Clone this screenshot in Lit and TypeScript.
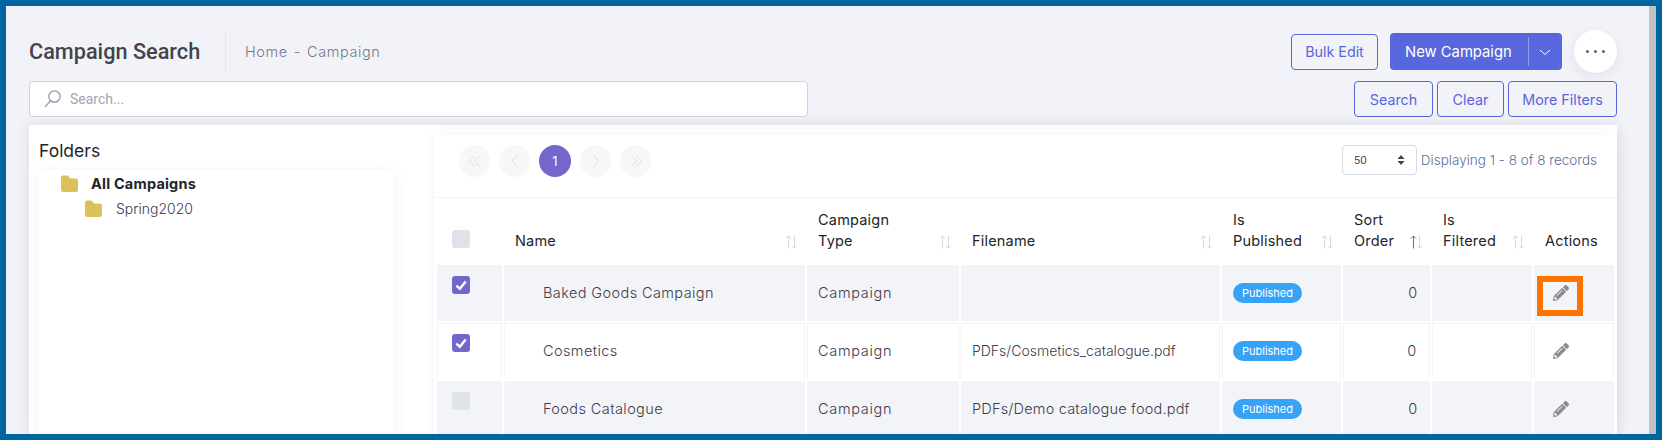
import { LitElement, html, css, svg } from "lit";
import { customElement } from "lit/decorators.js";

const PENCIL = "M497.9 142.1l-46.1 46.1c-4.7 4.7-12.3 4.7-17 0l-111-111c-4.7-4.7-4.7-12.3 0-17l46.1-46.1c18.7-18.7 49.1-18.7 67.9 0l60.1 60.1c18.8 18.7 18.8 49.1 0 67.9zM284.2 99.8L21.6 362.4.4 483.9c-2.9 16.4 11.4 30.6 27.8 27.8l121.5-21.3 262.6-262.6c4.7-4.7 4.7-12.3 0-17l-111-111c-4.8-4.7-12.4-4.7-17.1 0zM124.1 339.9c-5.5-5.5-5.5-14.3 0-19.8l154-154c5.5-5.5 14.3-5.5 19.8 0s5.5 14.3 0 19.8l-154 154c-5.5 5.5-14.3 5.5-19.8 0zM88 424h48v36.3l-64.5 11.3-31.1-31.1L51.7 376H88v48z";

const folder = html`<svg class="folder" viewBox="0 0 17 17"><path d="M2 0.5h4c.8 0 1.3.4 1.7 1L9 3.5h6c1.1 0 2 .9 2 2V15c0 1.1-.9 2-2 2H2c-1.1 0-2-.9-2-2V2.5c0-1.1.9-2 2-2z" fill="#dcc05a"/></svg>`;

const pencil = html`<svg class="pencil" viewBox="0 0 512 512"><path d=${PENCIL} fill="#8b8b97"/></svg>`;

const sortIcon = (active = false) => html`<svg class="sort" viewBox="0 0 13 14" fill="none" stroke-width="1">
  ${svg`<path d="M3.5 13.500V1M1 3.500 3.500 1 6 3.500" stroke=${active ? "#6b6b78" : "#d8dae0"}/>
  <path d="M9.500 .5V13M7 10.500 9.500 13 12 10.500" stroke="#d8dae0"/>`}
</svg>`;

const chev = (d: string) => html`<svg viewBox="0 0 12 12" width="12" height="12" fill="none" stroke="#dcdde4" stroke-width="1">${svg`<path d=${d}/>`}</svg>`;

const rows = [
  { name: "Baked Goods Campaign", file: "", fcls: "", checked: true, marked: true },
  { name: "Cosmetics", file: "PDFs/Cosmetics_catalogue.pdf", fcls: "f1", checked: true, marked: false },
  { name: "Foods Catalogue", file: "PDFs/Demo catalogue food.pdf", fcls: "f2", checked: false, marked: false },
];

const COLS = [65, 301, 152, 259, 119, 87, 100, 80];

@customElement("app-root")
export class AppRoot extends LitElement {
  static styles = css`
    :host { display: block; height: 440px; overflow: hidden; font-family: Inter, "Liberation Sans", sans-serif; }
    * { box-sizing: border-box; }
    .frame { height: 440px; border: 6px solid #0065a1; display: flex; overflow: hidden; background: #f2f3f8; }
    .main { flex: 1; min-width: 0; padding: 24px 32px 0 23px; display: flex; flex-direction: column; }
    .scrollbar { width: 7px; background: #c1c1c1; flex: none; }
    .head { display: flex; align-items: center; height: 43px; flex: none; }
    h1 { margin: 0; font: 500 21.7px/1 Roboto, sans-serif; color: #434349; width: 196px; white-space: nowrap; }
    .vline { width: 1px; height: 41px; background: #e2e5ec; }
    .crumbs { margin-left: 19px; display: flex; gap: 6px; font-size: 14.5px; font-weight: 300; letter-spacing: .6px; color: #74788d; }
    .spacer { flex: 1; }
    .btn { height: 36px; border: 1px solid #5867dd; border-radius: 4px; background: transparent; color: #5867dd;
      font: 400 14.3px Inter, sans-serif; display: flex; align-items: center; justify-content: center; padding: 0; }
    .bulk { width: 87px; }
    .split { margin-left: 12px; width: 172px; height: 37px; background: #5867dd; border-radius: 4px; color: #fff;
      display: flex; align-items: center; font-size: 14.8px; font-weight: 400; padding-left: 15px; }
    .split .lbl { width: 123px; white-space: nowrap; }
    .split .sep { width: 1px; height: 29px; background: rgba(255,255,255,.35); }
    .split svg { margin-left: 10px; }
    .more { margin-left: 12px; width: 43px; height: 43px; border-radius: 50%; background: #fff;
      box-shadow: 0 3px 12px rgba(82,63,105,.1); display: flex; align-items: center; justify-content: center; gap: 5px; }
    .more i { width: 3px; height: 3px; border-radius: 50%; background: #595d6e; }
    .filters { display: flex; margin-top: 8px; height: 36px; flex: none; gap: 4px; }
    .input { width: 779px; height: 36px; background: #fff; border: 1px solid #d0d3dc; border-radius: 4px; display: flex; align-items: center;
      padding-left: 14px; font: 400 14px Roboto, sans-serif; color: #a3a5b1; gap: 9px; margin-right: auto; }
    .s-search { width: 79px; } .s-clear { width: 67px; } .s-more { width: 109px; }
    .wrap { margin-top: 8px; flex: 1; min-height: 0; background: #fff; padding-top: 6px; display: flex; align-items: flex-start;
      box-shadow: 0 0 13px rgba(82,63,105,.14); }
    .left { width: 375px; height: 340px; padding: 0 10px; flex: none; }
    .left h2 { margin: 0; padding-top: 9px; height: 39px; font-size: 17.5px; font-weight: 400; line-height: 22px; color: #212529; }
    .tree { height: 300px; padding-top: 5px; background: #fff; box-shadow: 0 0 13px rgba(82,63,105,.06); }
    .node { display: flex; align-items: center; height: 17px; font-size: 14px; color: #3c3b4d; font-weight: 300; white-space: nowrap; }
    .node.root { padding-left: 22px; gap: 13px; font-size: 14.5px; letter-spacing: .2px; font-weight: 700; color: #212529; margin-bottom: 8px; }
    .node.sub { padding-left: 46px; gap: 14px; }
    .folder { width: 17px; height: 17px; flex: none; }
    .right { margin: 4px 0 0 30px; flex: 1; background: #fff; height: 320px; box-shadow: 0 0 13px rgba(82,63,105,.06); }
    .pager { height: 63px; border-bottom: 1px solid #f3f4f7; display: flex; padding: 10px 20px 0 25px; }
    .circle { width: 31px; height: 32px; border-radius: 50%; background: #f7f7f9; display: flex; align-items: center; justify-content: center;
      margin-right: 9px; font-size: 13px; }
    .circle.on { background: #7367cc; color: #fff; width: 32px; margin-right: 9px; }
    .pg-right { margin-left: auto; display: flex; align-items: center; height: 30px; color: #646c9a; font-size: 13.5px; font-weight: 300; white-space: nowrap; }
    .select { width: 75px; height: 30px; border: 1px solid #d8dbe3; border-radius: 4px; display: flex; align-items: center; justify-content: space-between;
      padding: 0 11px; font: 400 11.5px Roboto, sans-serif; color: #495057; margin-right: 4px; }
    table { table-layout: fixed; border-collapse: separate; border-spacing: 2px; width: 1181px; margin-left: 1px; }
    th { height: 63px; vertical-align: bottom; padding: 0 7px 12px 11px; text-align: left; font-weight: 400; font-size: 14.5px; letter-spacing: .2px; line-height: 21px; color: #212529; }
    th .h { display: flex; justify-content: space-between; align-items: flex-end; }
    th.cbh { padding: 0 0 15px 15px; }
    .sort { width: 13px; height: 14px; flex: none; margin-bottom: 2px; }
    td { height: 56px; padding: 0 11px 2px; font-size: 14.5px; font-weight: 300; letter-spacing: .7px; color: #3c3b4d; vertical-align: middle; position: relative; white-space: nowrap; }
    tr.odd td { background: #f3f4f8; }
    tr.even td { border: 1px solid #f3f4f6; border-bottom-color: transparent; padding-left: 10px; }
    td.cb { padding: 11px 0 0 15px; vertical-align: top; }
    tr.even td.cb { padding: 10px 0 0 14px; }
    td.nm { padding-left: 39px; letter-spacing: .4px; }
    tr.even td.nm { padding-left: 38px; }
    td.pub { padding-bottom: 0; }
    td.num { text-align: right; padding-right: 12px; }
    td.act { padding-left: 19px; padding-bottom: 0; }
    tr.even td.act { padding-left: 18px; }
    td.f1 { font-size: 14px; letter-spacing: 0; }
    td.f2 { font-size: 14.5px; letter-spacing: .2px; }
    .check { width: 18px; height: 18px; border-radius: 3px; background: #e0e2ea; display: flex; align-items: center; justify-content: center; }
    .check.on { background: #7367cc; }
    .badge { display: inline-flex; align-items: center; justify-content: center; width: 69px; height: 20px; border-radius: 10px; background: #36a3f7; color: #fff; font-size: 11px; font-weight: 400; letter-spacing: 0; vertical-align: middle; }
    .pencil { width: 16px; height: 16px; display: block; }
    .mark { position: absolute; left: 3px; top: 11px; width: 46px; height: 40px; border: 6px solid #ff7300; }
  `;

  render() {
    return html`<div class="frame">
      <div class="main">
        <div class="head">
          <h1>Campaign Search</h1><div class="vline"></div>
          <div class="crumbs"><span>Home</span><span>-</span><span>Campaign</span></div>
          <div class="spacer"></div>
          <button class="btn bulk">Bulk Edit</button>
          <div class="split"><span class="lbl">New Campaign</span><span class="sep"></span>
            <svg viewBox="0 0 12 12" width="12" height="12" fill="none" stroke="#fff" stroke-width="1"><path d="M1 4l5 4.500L11 4"/></svg></div>
          <div class="more"><i></i><i></i><i></i></div>
        </div>
        <div class="filters">
          <div class="input"><svg viewBox="0 0 17 18" width="17" height="18" fill="none" stroke-width="1.2"><circle cx="10.500" cy="6.500" r="5.700" stroke="#8f8fa8"/><path d="M6.500 10.700 1 17" stroke="#a29bd0" stroke-width="1.4"/></svg><span>Search...</span></div>
          <button class="btn s-search">Search</button><button class="btn s-clear">Clear</button><button class="btn s-more">More Filters</button>
        </div>
        <div class="wrap">
          <div class="left"><h2>Folders</h2>
            <div class="tree">
              <div class="node root">${folder}<span>All Campaigns</span></div>
              <div class="node sub">${folder}<span>Spring2020</span></div>
            </div>
          </div>
          <div class="right">
            <div class="pager">
              <div class="circle">${chev("M6 .5 .5 6 6 11.500M11 .5 5.500 6 11 11.500")}</div>
              <div class="circle">${chev("M8.500 .5 3 6 8.500 11.500")}</div>
              <div class="circle on">1</div>
              <div class="circle">${chev("M3.500 .5 9 6 3.500 11.500")}</div>
              <div class="circle">${chev("M1 .5 6.500 6 1 11.500M6 .5 11.500 6 6 11.500")}</div>
              <div class="pg-right"><div class="select"><span>50</span>
                <svg viewBox="0 0 8 12" width="8" height="12" fill="#3f4254"><path d="M4 1l3.500 4h-7zM4 11 .5 7h7z"/></svg></div>
                <span>Displaying 1 - 8 of 8 records</span></div>
            </div>
            <table>
              <colgroup>${COLS.map((w) => html`<col style="width:${w}px"/>`)}</colgroup>
              <thead><tr>
                <th class="cbh"><div class="check"></div></th>
                <th><div class="h"><span>Name</span>${sortIcon()}</div></th>
                <th><div class="h"><span>Campaign<br/>Type</span>${sortIcon()}</div></th>
                <th><div class="h"><span>Filename</span>${sortIcon()}</div></th>
                <th><div class="h"><span>Is<br/>Published</span>${sortIcon()}</div></th>
                <th><div class="h"><span>Sort<br/>Order</span>${sortIcon(true)}</div></th>
                <th><div class="h"><span>Is<br/>Filtered</span>${sortIcon()}</div></th>
                <th>Actions</th>
              </tr></thead>
              <tbody>
                ${rows.map((r, i) => html`<tr class=${i % 2 ? "even" : "odd"}>
                  <td class="cb"><div class="check ${r.checked ? "on" : ""}">${r.checked ? html`<svg viewBox="0 0 12 12" width="14" height="14" fill="none" stroke="#fff" stroke-width="2"><path d="M2 6.500 5 9.200 10 3"/></svg>` : ""}</div></td>
                  <td class="nm">${r.name}</td>
                  <td>Campaign</td>
                  <td class=${r.fcls}>${r.file}</td>
                  <td class="pub"><span class="badge">Published</span></td>
                  <td class="num">0</td>
                  <td></td>
                  <td class="act">${pencil}${r.marked ? html`<div class="mark"></div>` : ""}</td>
                </tr>`)}
              </tbody>
            </table>
          </div>
        </div>
      </div>
      <div class="scrollbar"></div>
    </div>`;
  }
}
